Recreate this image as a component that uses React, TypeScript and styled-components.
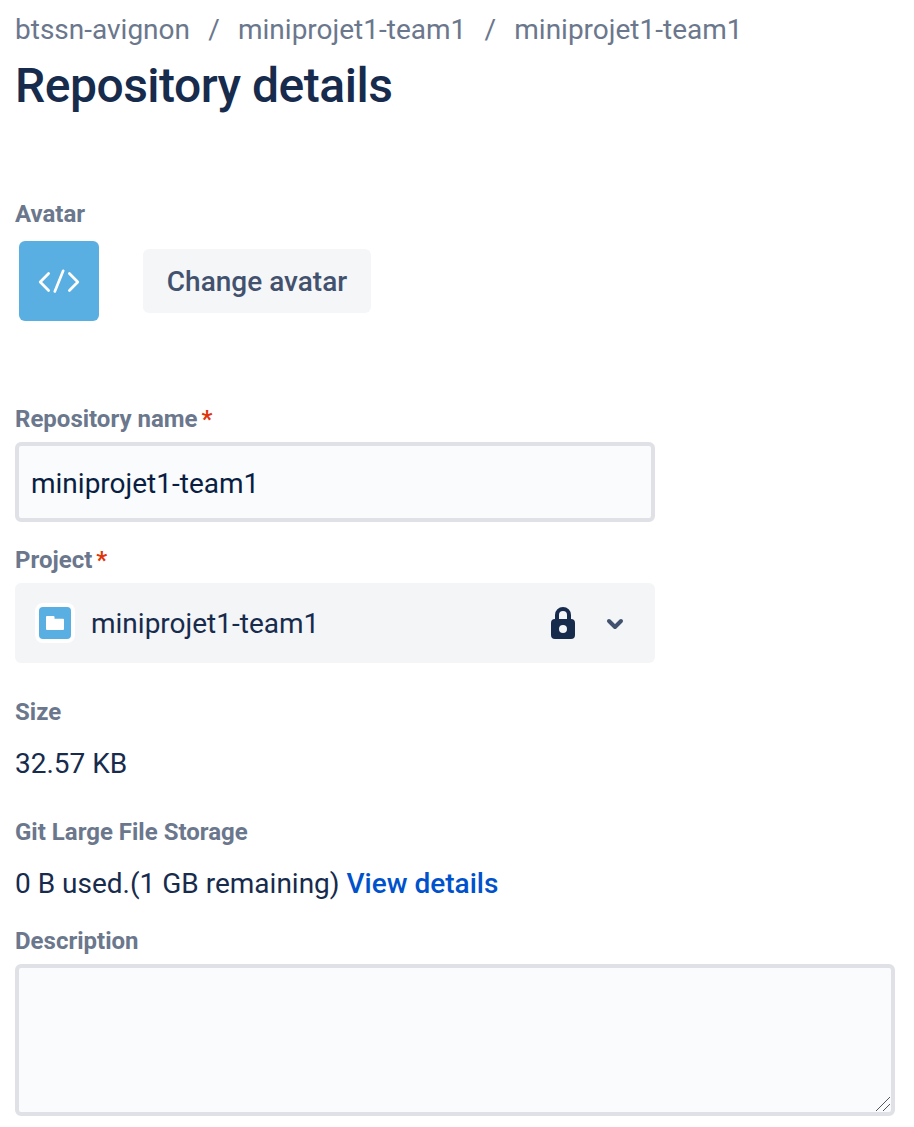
import React from "react";
import styled, { createGlobalStyle } from "styled-components";

const Global = createGlobalStyle`
  * { box-sizing: border-box; }
  body { margin: 0; background: #fff; font-family: Roboto, sans-serif; font-size: 28px; color: #172b4d; overflow: hidden; }
`;
const Page = styled.main`
  display: flex; flex-direction: column; align-items: flex-start;
  padding: 10px 19px 0 15px; height: 1127px;
`;
const Crumbs = styled.nav`
  display: flex; height: 40px; line-height: 40px; color: #6b778c; white-space: pre;
`;
const Slash = styled.span`width: 48px; text-align: center;`;
const Title = styled.h1`
  margin: 8px 0 0; font-size: 48px; line-height: 56px; font-weight: 500; letter-spacing: -0.5px;
`;
const Label = styled.label<{ $top: number }>`
  display: flex; margin-top: ${p => p.$top}px; height: 32px; line-height: 32px;
  font-size: 24px; font-weight: 700; color: #6b778c;
`;
const Star = styled.span`color: #de350b; padding-left: 4px;`;
const AvatarRow = styled.div`display: flex; align-items: center; gap: 44px; margin-top: 11px; padding-left: 4px;`;
const Avatar = styled.div`
  width: 80px; height: 80px; border-radius: 6px; background: #59afe1;
  svg { display: block; }
`;
const Button = styled.button`
  width: 228px; height: 64px; border: 0; border-radius: 6px; padding: 2px 0 0;
  background: #f5f6f8; color: #42526e; font: 500 28px/62px Roboto, sans-serif;
`;
const Input = styled.input`
  width: 640px; height: 80px; margin-top: 7px; padding: 2px 12px 0; border: 4px solid #dfe1e6; border-radius: 6px;
  background: #fafbfc; color: #091e42; font: 400 28px/40px Roboto, sans-serif;
`;
const Select = styled.div`
  display: flex; align-items: center; width: 640px; height: 80px; margin-top: 7px; padding: 0 20px;
  background: #f4f5f7; border-radius: 6px;
`;
const ProjectIcon = styled.span`
  width: 40px; height: 40px; padding: 4px; border-radius: 8px; background: #fff; margin-right: 16px;
  svg { display: block; border-radius: 4px; background: #59afe1; }
`;
const Name = styled.span`flex: 1;`;
const Lock = styled.svg`margin-right: 20px;`;
const Value = styled.p<{ $top: number }>`margin: ${p => p.$top}px 0 0; height: 40px; line-height: 40px;`;
const Link = styled.a`color: #0052cc; font-weight: 500;`;
const TextareaWrap = styled.div`position: relative; width: 880px; height: 152px; margin-top: 7px;`;
const Textarea = styled.textarea`
  display: block; width: 100%; height: 100%; border: 4px solid #dfe1e6; border-radius: 6px;
  background: #fafbfc; resize: none;
`;
const Grip = styled.svg`position: absolute; right: 4px; bottom: 4px; pointer-events: none;`;

export default function App() {
  return (
    <>
      <Global />
      <Page>
        <Crumbs>
          <span>btssn-avignon</span><Slash>/</Slash><span>miniprojet1-team1</span><Slash>/</Slash><span>miniprojet1-team1</span>
        </Crumbs>
        <Title>Repository details</Title>
        <Label as="div" $top={84}>Avatar</Label>
        <AvatarRow>
          <Avatar>
            <svg width="80" height="80" viewBox="0 0 80 80" fill="none" stroke="#fff" strokeWidth="2.7" strokeLinecap="round" strokeLinejoin="round">
              <path d="M29.600 32.500L21.200 41l8.400 8.500M50.400 32.500l8.400 8.500-8.400 8.500M44.200 29.800l-8.400 20.600" />
            </svg>
          </Avatar>
          <Button>Change avatar</Button>
        </AvatarRow>
        <Label htmlFor="name" $top={82}>Repository name<Star>*</Star></Label>
        <Input id="name" defaultValue="miniprojet1-team1" />
        <Label as="div" $top={22}>Project<Star>*</Star></Label>
        <Select>
          <ProjectIcon>
            <svg width="32" height="32" viewBox="0 0 32 32" fill="#fff"><path d="M8 9h6.500q1 0 1 1v1.700H24q1 0 1 1V22q0 1-1 1H8q-1 0-1-1V10q0-1 1-1z" /></svg>
          </ProjectIcon>
          <Name>miniprojet1-team1</Name>
          <Lock width="24" height="32" viewBox="0 0 24 32">
            <path d="M6 14V8a6 6 0 0 1 12 0v6" fill="none" stroke="#172b4d" strokeWidth="4" />
            <path fillRule="evenodd" fill="#172b4d" d="M4 12h16q4 0 4 4v12q0 4-4 4H4q-4 0-4-4V16q0-4 4-4zM12 18a4 4 0 1 0 0 8 4 4 0 0 0 0-8z" />
          </Lock>
          <svg width="40" height="40" viewBox="0 0 40 40" fill="none" stroke="#42526e" strokeWidth="4" strokeLinecap="round" strokeLinejoin="round"><path d="M14 18l6 6 6-6" /></svg>
        </Select>
        <Label as="div" $top={33}>Size</Label>
        <Value $top={16}>32.57 KB</Value>
        <Label as="div" $top={32}>Git Large File Storage</Label>
        <Value $top={16}>0 B used.(1 GB remaining) <Link>View details</Link></Value>
        <Label htmlFor="desc" $top={21}>Description</Label>
        <TextareaWrap>
          <Textarea id="desc" />
          <Grip width="16" height="16" viewBox="0 0 16 16" fill="none" stroke="#555" shapeRendering="crispEdges">
            <path d="M1 15L15 1M8 15l7-7" />
          </Grip>
        </TextareaWrap>
      </Page>
    </>
  );
}
